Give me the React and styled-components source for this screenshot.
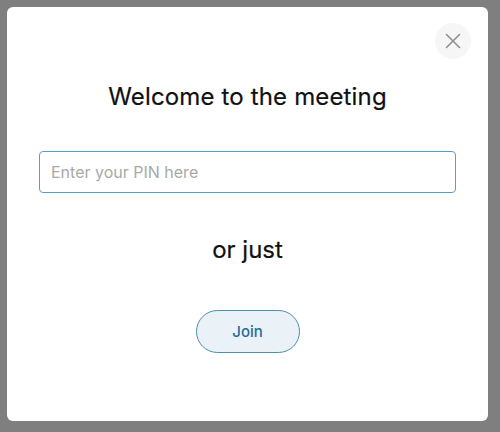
import React from "react";
import styled, { createGlobalStyle } from "styled-components";

const Global = createGlobalStyle`
  html, body { margin: 0; padding: 0; background: #7f7f7f; }
  body { font-family: Inter, "Noto Sans", sans-serif; }
  * { box-sizing: border-box; }
`;

const Backdrop = styled.div`
  width: 500px;
  height: 432px;
  padding: 7px 12px 11px 7px;
  display: flex;
`;

const Modal = styled.div`
  width: 481px;
  height: 414px;
  background: #ffffff;
  border-radius: 6px;
  padding: 16px 17px 0 32px;
  display: flex;
  flex-direction: column;
`;

const Header = styled.div`
  display: flex;
  justify-content: flex-end;
`;

const CloseButton = styled.button`
  width: 36px;
  height: 36px;
  border-radius: 50%;
  border: none;
  background: #f6f6f6;
  display: flex;
  align-items: center;
  justify-content: center;
  padding: 0;
  cursor: pointer;
`;

const Body = styled.div`
  display: flex;
  flex-direction: column;
  align-items: center;
  padding-right: 15px;
`;

const Title = styled.h1`
  margin: 23px 0 0;
  font-size: 24px;
  font-weight: 400;
  color: #111111;
  line-height: 30px;
  letter-spacing: 0.15px;
  -webkit-text-stroke: 0.2px #111111;
`;

const PinInput = styled.input`
  margin-top: 39px;
  width: 417px;
  height: 42px;
  border: 1px solid #4fa5bf;
  border-radius: 4px;
  padding: 0 11px;
  font-family: Inter, "Noto Sans", sans-serif;
  font-size: 16px;
  color: #222;
  outline: none;
  &::placeholder { color: #a9a9a9; }
`;

const Or = styled.div`
  margin-top: 42px;
  font-size: 24px;
  color: #111111;
  line-height: 30px;
  -webkit-text-stroke: 0.2px #111111;
`;

const JoinButton = styled.button`
  margin-top: 45px;
  width: 104px;
  height: 43px;
  border-radius: 22px;
  border: 1px solid #4d8eaa;
  background: #eaf2f8;
  color: #2b6a93;
  font-family: Inter, "Noto Sans", sans-serif;
  font-size: 15px;
  font-weight: 500;
  cursor: pointer;
`;

export default function App() {
  return (
    <>
      <Global />
      <Backdrop>
        <Modal>
          <Header>
            <CloseButton aria-label="Close">
              <svg width="16" height="16" viewBox="0 0 16 16">
                <path d="M1.5 1.5 L14.5 14.5 M14.5 1.5 L1.5 14.5" stroke="#909090" strokeWidth="1.6" strokeLinecap="round" />
              </svg>
            </CloseButton>
          </Header>
          <Body>
            <Title>Welcome to the meeting</Title>
            <PinInput placeholder="Enter your PIN here" />
            <Or>or just</Or>
            <JoinButton>Join</JoinButton>
          </Body>
        </Modal>
      </Backdrop>
    </>
  );
}
